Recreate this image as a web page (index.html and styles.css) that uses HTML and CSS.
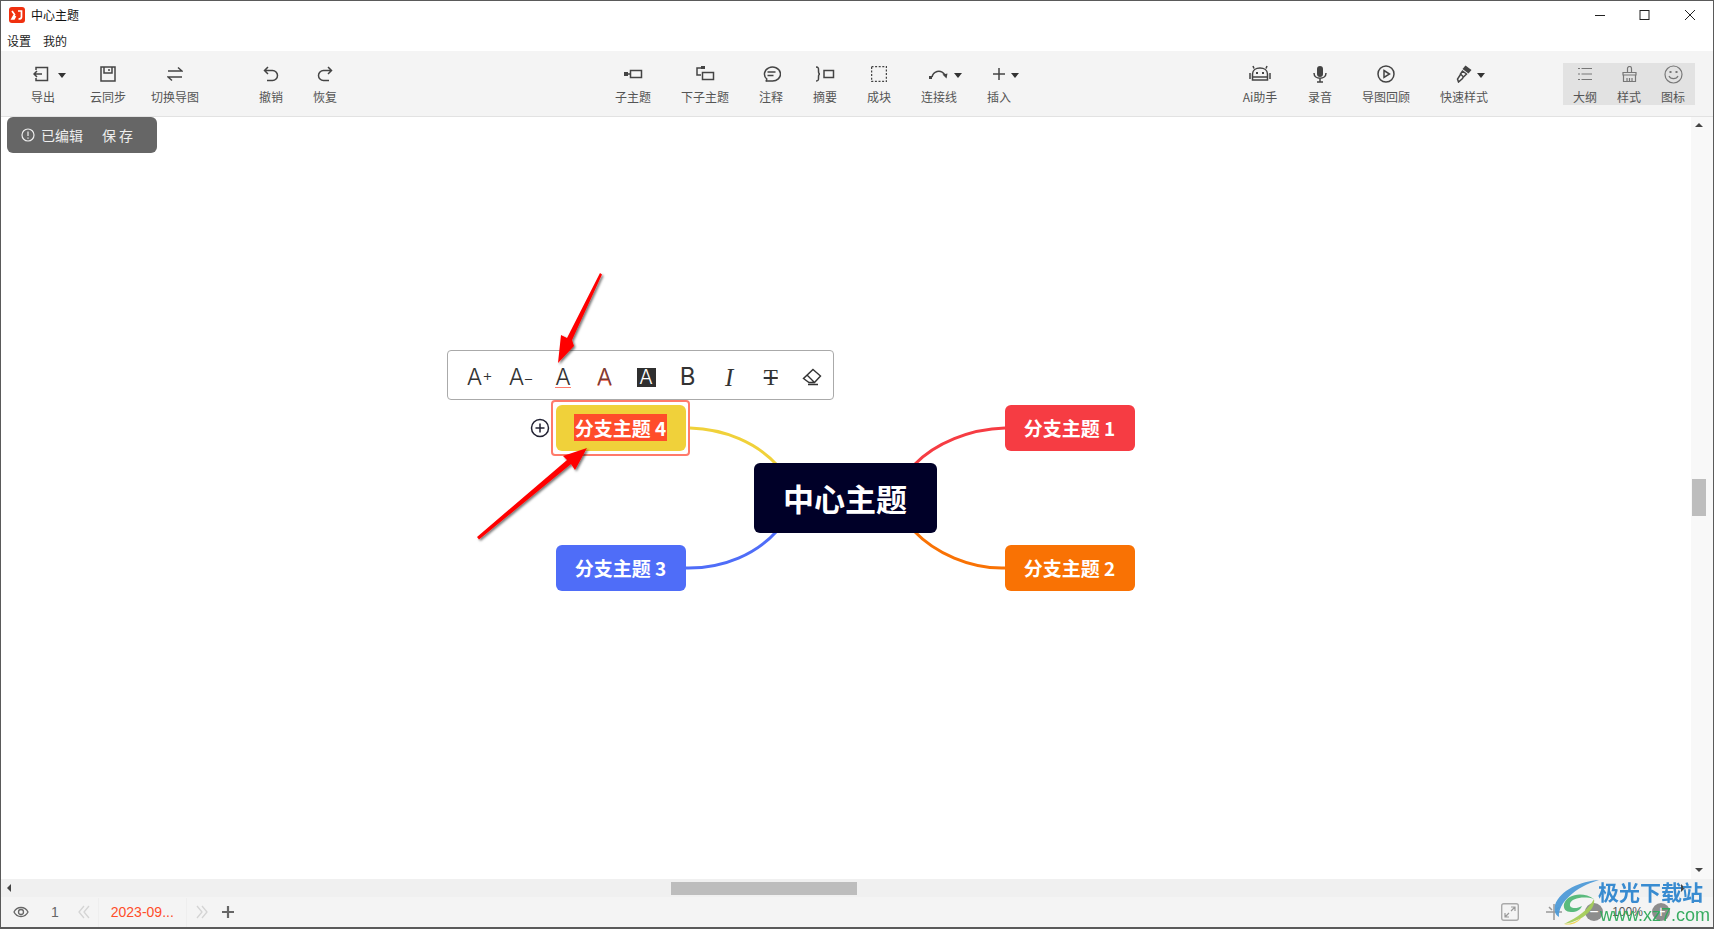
FILE: index.html
```html
<!DOCTYPE html>
<html>
<head>
	<meta charset="utf-8"/>
	<title>中心主题</title>
	<link rel="stylesheet" href="styles.css">
</head>
<body>
	<div id="window">
		<div id="titlebar">
			<svg class="logo" viewBox="0 0 16 16"><rect width="16" height="16" rx="3" fill="#f0300f"/><path d="M3 4l2.500 3.500L3 12h2l1.500-3M9 4h3.500v6c0 1.500-1 2-3 2" fill="none" stroke="#fff" stroke-width="1.700"/></svg>
			<span id="doctitle">中心主题</span>
			<div id="winbuttons">
				<svg viewBox="0 0 45 20"><path d="M17 10.500h10" stroke="#222" stroke-width="1"/></svg>
				<svg viewBox="0 0 45 20"><rect x="17" y="5.500" width="9" height="9" fill="none" stroke="#222"/></svg>
				<svg viewBox="0 0 45 20"><path d="M17 5l10 10M27 5L17 15" stroke="#222" fill="none"/></svg>
			</div>
		</div>
		<div id="menubar"><span>设置</span><span>我的</span></div>

		<div id="toolbar">
			<div class="group group-file">
				<div class="tool"><div class="icon"><svg width="20" height="18" viewBox="0 0 20 18"><path d="M3 5V2.500h11.500v13H3V13M9 9H1M4 6L1 9l3 3"/></svg><i class="caret"></i></div>导出</div>
				<div class="tool"><div class="icon"><svg width="16" height="16" viewBox="0 0 16 16"><path d="M1 1h14v14H1zM4 1v6h8V1M9 3v2"/></svg></div>云同步</div>
				<div class="tool"><div class="icon"><svg width="16" height="16" viewBox="0 0 16 16"><path d="M1 5h14l-4-3.500M15 11H1l4 3.500"/></svg></div>切换导图</div>
			</div>
			<div class="group group-undo">
				<div class="tool"><div class="icon"><svg width="16" height="16" viewBox="0 0 16 16"><path d="M5 1L1.500 4.500 5 8M2 4.500h7.500a4.500 4.500 0 0 1 0 10H4"/></svg></div>撤销</div>
				<div class="tool"><div class="icon"><svg width="16" height="16" viewBox="0 0 16 16"><path d="M11 1l3.500 3.500L11 8M14 4.500H6.500a4.500 4.500 0 0 0 0 10H12"/></svg></div>恢复</div>
			</div>
			<div class="group group-topic">
				<div class="tool"><div class="icon"><svg width="20" height="12" viewBox="0 0 20 12"><rect class="solid" x="1" y="4" width="4" height="4"/><path d="M5 6h2M7.500 2.500h11v7h-11z"/></svg></div>子主题</div>
				<div class="tool"><div class="icon"><svg width="20" height="16" viewBox="0 0 20 16"><rect class="solid" x="6" y="0" width="4" height="3"/><path d="M6 2H2v7h4M7.500 6.500h11v7h-11z"/></svg></div>下子主题</div>
				<div class="tool"><div class="icon"><svg width="19" height="19" viewBox="0 0 19 19"><path d="M4 16.500l.8-2.500A8 7 0 1 1 9.500 16H4.500zM5.500 7h8M5.500 10.500h6"/></svg></div>注释</div>
				<div class="tool"><div class="icon"><svg width="20" height="16" viewBox="0 0 20 16"><path d="M1 1c3 0 2.500 2 2.500 4S4 8 5 8c-1 0-1.500 1-1.500 3s.5 4-2.500 4M9 4.500h9.500v7H9z"/></svg></div>摘要</div>
				<div class="tool"><div class="icon"><svg width="16" height="16" viewBox="0 0 16 16"><rect class="dashed" x=".5" y=".5" width="15" height="15"/></svg></div>成块</div>
				<div class="tool"><div class="icon"><svg width="20" height="12" viewBox="0 0 20 12"><rect class="solid" x="0" y="8" width="3" height="3"/><path d="M3 9c1-5 8-9 13-2"/><path class="solid" d="M13.500 6.500l5-1-1 5z"/></svg><i class="caret"></i></div>连接线</div>
				<div class="tool"><div class="icon"><svg width="14" height="14" viewBox="0 0 14 14"><path d="M7 1v12M1 7h12"/></svg><i class="caret"></i></div>插入</div>
			</div>
			<div class="group group-extra">
				<div class="tool"><div class="icon"><svg width="22" height="18" viewBox="0 0 22 18"><path d="M5 3.500L4 1M17 3.500L18 1M3.500 9c0-4 3.500-6 7.500-6s7.500 2 7.500 6v6h-15zM3.500 12h15M1 8v6M21 8v6"/><rect class="solid" x="7" y="7" width="2" height="2"/><rect class="solid" x="13" y="7" width="2" height="2"/></svg></div>Ai助手</div>
				<div class="tool"><div class="icon"><svg width="14" height="17" viewBox="0 0 14 17"><rect class="solid" x="4" y="0" width="6" height="11" rx="3"/><path d="M1 7c0 7 12 7 12 0M7 12v4M4 16h6"/></svg></div>录音</div>
				<div class="tool"><div class="icon"><svg width="18" height="18" viewBox="0 0 18 18"><circle cx="9" cy="9" r="8"/><path d="M7 5.500l5.500 3.500L7 12.500z"/></svg></div>导图回顾</div>
				<div class="tool"><div class="icon"><svg width="16" height="18" viewBox="0 0 16 18"><path class="solid" d="M9.500 .5l6 4.500-3 3.500-6-4.500z"/><path d="M6.500 6l4 3-3 3-3-3zM4.500 9.500L1.500 14l1 3 4-3.500 1-2"/></svg><i class="caret"></i></div>快速样式</div>
			</div>
			<div class="group group-panel">
				<div class="tool"><div class="icon"><svg width="14" height="14" viewBox="0 0 14 14"><path d="M3.500 1.500H14M3.500 7H14M3.500 12.500H14M0 1.500h2M0 7h2M0 12.500h2"/></svg></div>大纲</div>
				<div class="tool"><div class="icon"><svg width="15" height="16" viewBox="0 0 15 16"><path d="M5.500 6V2.500a2 2 0 0 1 4 0V6M1 6.500h13V9H1zM1.500 9v6.500h12V9M5 12v3.500M7.500 12v3.500M10 12v3.500"/></svg></div>样式</div>
				<div class="tool"><div class="icon"><svg width="19" height="19" viewBox="0 0 19 19"><circle cx="9.500" cy="9.500" r="8.500"/><path d="M5 11c1.500 3.500 7.500 3.500 9 0"/><rect class="solid" x="5.500" y="6" width="2" height="2"/><rect class="solid" x="11.500" y="6" width="2" height="2"/></svg></div>图标</div>
			</div>
		</div>

		<div id="middle">
			<div id="canvas">
				<div id="notice">
					<svg width="14" height="14" viewBox="0 0 14 14"><circle cx="7" cy="7" r="6" fill="none" stroke="#eee" stroke-width="1.200"/><path d="M7 3.500v4.500M7 9.500v1.200" stroke="#eee" stroke-width="1.200"/></svg>
					<span>已编辑</span>
					<span class="save">保存</span>
				</div>
			</div>
			<div id="vscroll">
				<i class="arrow-up"></i>
				<div id="vthumb"></div>
				<i class="arrow-down"></i>
			</div>
		</div>
		<div id="hscroll">
			<i class="arrow-left"></i>
			<div id="hthumb"></div>
			<i class="arrow-right"></i>
		</div>

		<div id="statusbar">
			<svg class="eye" width="16" height="12" viewBox="0 0 16 12"><path d="M1 6c3-6 11-6 14 0-3 6-11 6-14 0z" fill="none" stroke="#666" stroke-width="1.300"/><circle cx="8" cy="6" r="2.500" fill="none" stroke="#666" stroke-width="1.300"/></svg>
			<span class="pagecount">1</span>
			<svg class="pager" width="12" height="14" viewBox="0 0 12 14"><path d="M6 1L1 7l5 6M11 1L6 7l5 6" fill="none" stroke="#d4d4d4" stroke-width="1.300"/></svg>
			<span class="tab">2023-09...</span>
			<svg class="pager" width="12" height="14" viewBox="0 0 12 14"><path d="M1 1l5 6-5 6M6 1l5 6-5 6" fill="none" stroke="#d4d4d4" stroke-width="1.300"/></svg>
			<svg class="addtab" width="12" height="12" viewBox="0 0 12 12"><path d="M6 0v12M0 6h12" stroke="#666" stroke-width="2.200"/></svg>
			<div id="zoomtools">
				<svg width="18" height="18" viewBox="0 0 18 18"><rect x=".7" y=".7" width="16.600" height="16.600" rx="2" fill="none" stroke="#aaa" stroke-width="1.400"/><path d="M10 4h4v4M14 4l-4 4M4 10v4h4M4 14l4-4" fill="none" stroke="#999" stroke-width="1.200"/></svg>
				<svg class="locate" width="18" height="18" viewBox="0 0 18 18"><path d="M9 1v16M1 9h16M4 4l3 3M14 4l-3 3" stroke="#999" stroke-width="1.500"/></svg>
				<span class="zoombtn">−</span>
				<span class="zoomval">100%</span>
				<span class="zoombtn">+</span>
			</div>
		</div>
	</div>

	<div id="map">
		<svg class="links" width="1714" height="929" viewBox="0 0 1714 929">
			<path d="M690 428C725 429 757 443 777 465" stroke="#f0d13a"/>
			<path d="M685 568C725 569 757 553 777 531" stroke="#4f6df8"/>
			<path d="M1005 428C970 429 935 443 914 465" stroke="#f63c43"/>
			<path d="M1005 568C970 569 935 553 914 531" stroke="#f97204"/>
		</svg>

		<div id="fmtbar">
			<span class="fmt">A<small>+</small></span>
			<span class="fmt">A<small class="minus">−</small></span>
			<span class="fmt"><u class="under">A</u></span>
			<span class="fmt fmt-red">A</span>
			<span class="fmt"><b class="inverse">A</b></span>
			<span class="fmt fmt-bold">B</span>
			<span class="fmt fmt-italic">I</span>
			<span class="fmt fmt-strike">T</span>
			<span class="fmt"><svg width="20" height="18" viewBox="0 0 20 18"><path d="M11 1.500l7.500 6.500-6 6.500H7L1.500 10.500zM5 7l7 7M6 16.500h10" fill="none" stroke="#333" stroke-width="1.400"/></svg></span>
		</div>

		<svg class="expand" width="20" height="20" viewBox="0 0 20 20"><circle cx="10" cy="10" r="8.500" fill="#fff" stroke="#223" stroke-width="1.500"/><path d="M10 5.500v9M5.500 10h9" stroke="#223" stroke-width="1.500"/></svg>
		<div class="selected"></div>
		<div class="node node-4"><span class="hl">分支主题 4</span></div>
		<div class="node node-3">分支主题 3</div>
		<div class="node node-1">分支主题 1</div>
		<div class="node node-2">分支主题 2</div>
		<div class="node center">中心主题</div>

		<svg class="arrows" width="1714" height="929" viewBox="0 0 1714 929">
			<defs><filter id="shade"><feDropShadow dx="1.500" dy="1.500" stdDeviation="1.200" flood-color="#000" flood-opacity=".55"/></filter></defs>
			<g filter="url(#shade)" fill="#f00">
				<path d="M600 273L602 274.500 572 340 574 346 558 363 561 335 567 338z"/>
				<path d="M477 537L479 539.500 571 464 575 470 587 448 563 456 567 460z"/>
			</g>
		</svg>

		<div id="watermark">
			<svg class="swirl" width="52" height="46" viewBox="0 0 52 46">
				<path d="M46 1C28 2 7 11 2 26c-1 5 0 10 4 12C5 24 22 8 46 1z" fill="#4f9bd8"/>
				<path d="M41 20C30 12 14 15 11 25c-1 5 2 8 7 8 6 0 9-2 11-6-5 3-13 3-12-2 1-6 14-8 24-5z" fill="#52b877"/>
				<path d="M41 20c2 9-10 22-30 25 14-7 24-14 30-25z" fill="#a6cf5a"/>
				<path d="M11 45c8 0 14-3 18-7-4 6-11 9-18 7z" fill="#efd24a"/>
			</svg>
			<div class="wm-text">
				<span class="wm-cn">极光下载站</span>
				<span class="wm-url">www.xz7.com</span>
			</div>
		</div>
	</div>
</body>
</html>
```
FILE: styles.css
```css
* {
	box-sizing: border-box;
}
html, body {
	margin: 0;
	height: 100%;
	overflow: hidden;
}
body {
	position: relative;
	background-color: #fff;
	font-family: "Noto Sans CJK SC", "Noto Sans", sans-serif;
	font-size: 12px;
	color: #555;
}
#window {
	display: flex;
	flex-direction: column;
	height: 929px;
	border: 1px solid #5a5a5a;
	border-bottom-width: 2px;
}

/* title and menu */
#titlebar {
	display: flex;
	align-items: center;
	height: 27px;
	flex: none;
	color: #111;
	padding-left: 8px;
}
.logo {
	width: 16px;
	height: 16px;
}
#doctitle {
	margin-left: 6px;
}
#winbuttons {
	display: flex;
	margin-left: auto;
}
#winbuttons svg {
	width: 45px;
	height: 20px;
}
#menubar {
	display: flex;
	gap: 12px;
	height: 23px;
	flex: none;
	align-items: center;
	padding: 1px 0 0 6px;
	color: #222;
}

/* toolbar */
#toolbar {
	display: flex;
	align-items: flex-start;
	height: 66px;
	flex: none;
	background-color: #f4f4f4;
	border-bottom: 1px solid #e2e2e2;
	padding-top: 12px;
	padding-left: 9px;
}
.group {
	display: grid;
}
.group-file {
	grid-template-columns: 66px 64px 70px;
}
.group-undo {
	grid-template-columns: 50px 58px;
	margin-left: 36px;
}
.group-topic {
	grid-template-columns: 66px 78px 54px 54px 54px 66px 54px;
	margin-left: 246px;
}
.group-extra {
	grid-template-columns: 60px 60px 72px 84px;
	margin-left: 204px;
}
.group-panel {
	grid-template-columns: repeat(3, 44px);
	margin-left: 57px;
	background-color: #e2e2e2;
	height: 42px;
}
.tool {
	display: flex;
	flex-direction: column;
	align-items: center;
	line-height: 18px;
	white-space: nowrap;
}
.icon {
	display: flex;
	align-items: center;
	justify-content: center;
	gap: 5px;
	height: 22px;
	margin-bottom: 3px;
}
.icon svg {
	fill: none;
	stroke: #444;
	stroke-width: 1.500;
}
.icon .solid {
	fill: #444;
	stroke: none;
}
.icon .dashed {
	stroke-dasharray: 2 1.600;
}
.group-panel .icon svg {
	stroke: #777;
	stroke-width: 1.200;
}
.group-panel .icon .solid {
	fill: #777;
	stroke: none;
}
.caret {
	width: 0;
	height: 0;
	border-left: 4px solid transparent;
	border-right: 4px solid transparent;
	border-top: 5px solid #333;
	margin: 3px -12px 0 0;
}

/* canvas and scrollbars */
#middle {
	display: flex;
	flex: 1;
	min-height: 0;
}
#canvas {
	flex: 1;
	position: relative;
}
#notice {
	display: flex;
	align-items: center;
	width: 150px;
	height: 36px;
	margin: 0 0 0 6px;
	padding-left: 14px;
	background-color: #666;
	border-radius: 6px;
	color: #eee;
	font-size: 14px;
}
#notice span:first-of-type {
	margin-left: 6px;
}
.save {
	margin-left: 19px;
	letter-spacing: 3px;
}
#vscroll {
	display: flex;
	flex-direction: column;
	align-items: center;
	width: 22px;
	background-color: #f8f8f8;
	padding: 6px 7px 7px 1px;
}
#vthumb {
	width: 14px;
	height: 37px;
	margin-top: 352px;
	flex: none;
	background-color: #bdbdbd;
}
.arrow-up {
	border-left: 4px solid transparent;
	border-right: 4px solid transparent;
	border-bottom: 4px solid #444;
}
.arrow-down {
	border-left: 4px solid transparent;
	border-right: 4px solid transparent;
	border-top: 4px solid #444;
	margin-top: auto;
}
#hscroll {
	display: flex;
	align-items: center;
	height: 18px;
	flex: none;
	background-color: #f0f0f0;
	padding-left: 6px;
}
#hthumb {
	width: 186px;
	height: 13px;
	margin-left: 660px;
	background-color: #bdbdbd;
}
.arrow-left {
	border-top: 4px solid transparent;
	border-bottom: 4px solid transparent;
	border-right: 4px solid #444;
}
.arrow-right {
	border-top: 4px solid transparent;
	border-bottom: 4px solid transparent;
	border-left: 4px solid #444;
	margin-left: auto;
	margin-right: 28px;
}

/* status bar */
#statusbar {
	display: flex;
	align-items: center;
	height: 30px;
	flex: none;
	background-color: #f4f4f4;
	padding-left: 12px;
	font-size: 14px;
	font-family: "Liberation Sans", "Noto Sans CJK SC", sans-serif;
}
.pagecount {
	margin-left: 22px;
	color: #666;
}
.pager {
	margin-left: 19px;
	margin-right: 8px;
}
.tab {
	width: 89px;
	text-align: center;
	color: #ff4d2a;
	border-left: 1px solid #eee;
	border-right: 1px solid #eee;
	line-height: 29px;
}
.tab + .pager {
	margin-left: 9px;
	margin-right: 0;
}
.addtab {
	margin-left: 14px;
}
#zoomtools {
	display: flex;
	align-items: center;
	margin-left: auto;
	margin-right: 43px;
}
.locate {
	margin-left: 26px;
}
.zoombtn {
	width: 18px;
	height: 18px;
	border-radius: 50%;
	background-color: #8d8d8d;
	color: #fff;
	text-align: center;
	font-size: 16px;
	line-height: 17px;
}
.locate + .zoombtn {
	margin-left: 22px;
}
.zoomval {
	width: 49px;
	text-align: center;
	font-size: 12px;
	color: #555;
}

/* mind map */
#map {
	position: absolute;
	left: 0;
	top: 0;
	width: 1714px;
	height: 929px;
	pointer-events: none;
}
.links, .arrows {
	position: absolute;
	left: 0;
	top: 0;
}
.links path {
	fill: none;
	stroke-width: 3;
}
.node {
	position: absolute;
	display: flex;
	align-items: center;
	justify-content: center;
	width: 130px;
	height: 46px;
	top: 405px;
	padding: 0 1px 2px 0;
	border-radius: 6px;
	color: #fff;
	font-size: 19px;
	font-weight: 700;
	white-space: pre;
}
.node-1 {
	left: 1005px;
	background-color: #f63c43;
}
.node-2 {
	left: 1005px;
	top: 545px;
	background-color: #f97204;
}
.node-3 {
	left: 556px;
	top: 545px;
	background-color: #4f6df8;
}
.node-4 {
	left: 556px;
	background-color: #f0d13a;
}
.center {
	left: 754px;
	top: 463px;
	width: 183px;
	height: 70px;
	background-color: #000028;
	font-size: 31px;
	font-weight: 700;
}
.hl {
	background-color: #ff4d2a;
	line-height: 27px;
	padding: 0 1px;
}
.selected {
	position: absolute;
	left: 551px;
	top: 400px;
	width: 139px;
	height: 56px;
	border: 2px solid #ff7a6a;
	border-radius: 4px;
}
.expand {
	position: absolute;
	left: 530px;
	top: 418px;
}

/* format bar over the node */
#fmtbar {
	position: absolute;
	left: 447px;
	top: 350px;
	display: flex;
	align-items: center;
	width: 387px;
	height: 50px;
	padding: 4px 0 0 11px;
	background-color: #fff;
	border: 1px solid #aaa;
	border-radius: 4px;
	font-family: Inter, "Liberation Sans", sans-serif;
	color: #333;
}
.fmt {
	display: flex;
	align-items: center;
	justify-content: center;
	width: 42.300px;
	height: 30px;
	font-size: 23px;
	font-weight: 300;
	line-height: 1;
}
.fmt small {
	font-size: 16px;
	margin-top: -5px;
}
.fmt small.minus {
	margin-top: 2px;
	margin-left: -1px;
}
.under {
	text-decoration: none;
	border-bottom: 1.500px solid #ff7a6a;
	line-height: 20px;
}
.fmt-red {
	color: #7a3a33;
	text-shadow: 0 1px 0 #f0806f;
}
.inverse {
	width: 19px;
	height: 19px;
	background-color: #2f2f2f;
	color: #fff;
	font-size: 20px;
	font-weight: 300;
	line-height: 19px;
	text-align: center;
}
.fmt-bold {
	font-weight: 400;
	font-size: 24px;
}
.fmt-italic {
	font-style: italic;
	font-family: "Liberation Serif", serif;
	font-size: 25px;
	font-weight: 400;
}
.fmt-strike {
	font-family: "Liberation Serif", serif;
	font-size: 23px;
	font-weight: 400;
	text-decoration: line-through;
	text-decoration-thickness: 1.500px;
}

/* watermark over the corner */
#watermark {
	position: absolute;
	left: 1553px;
	top: 879px;
	display: flex;
	opacity: .95;
}
.swirl {
	flex: none;
}
.wm-text {
	display: flex;
	flex-direction: column;
	margin-left: -7px;
	margin-top: 0;
}
.wm-cn {
	font-size: 21px;
	font-weight: 700;
	line-height: 24px;
	color: #2f86cf;
	white-space: nowrap;
}
.wm-url {
	font-family: "Liberation Sans", sans-serif;
	font-size: 18px;
	line-height: 24px;
	color: #2fa95a;
	margin-left: 2px;
}
```
